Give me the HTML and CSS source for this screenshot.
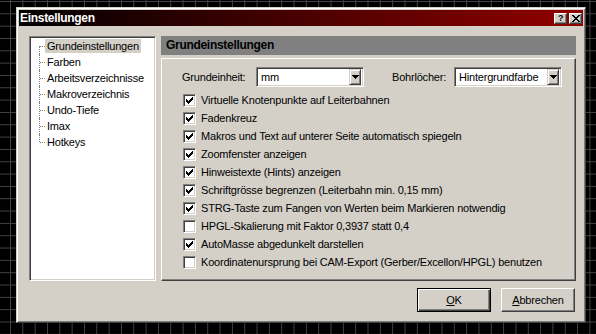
FILE: index.html
```html
<!DOCTYPE html>
<html lang="de">
<head>
    <meta charset="UTF-8">
    <title>Einstellungen</title>
    <link rel="stylesheet" href="styles.css">
</head>
<body>
    <div class="window">
        <div class="titlebar">
            <span class="title">Einstellungen</span>
            <div class="caption-buttons">
                <span class="cap-btn help">?</span>
                <span class="cap-btn">
                    <svg width="8" height="7" viewBox="0 0 8 7" shape-rendering="crispEdges">
                        <path d="M0 0h2v1h-2zM6 0h2v1h-2zM1 1h2v1h-2zM5 1h2v1h-2zM2 2h4v1h-4zM3 3h2v1h-2zM2 4h4v1h-4zM1 5h2v1h-2zM5 5h2v1h-2zM0 6h2v1h-2zM6 6h2v1h-2z" fill="#000"/>
                    </svg>
                </span>
            </div>
        </div>

        <div class="client">
            <div class="main">
                <div class="tree">
                    <ul>
                        <li class="first selected"><span>Grundeinstellungen</span></li>
                        <li><span>Farben</span></li>
                        <li><span>Arbeitsverzeichnisse</span></li>
                        <li><span>Makroverzeichnis</span></li>
                        <li><span>Undo-Tiefe</span></li>
                        <li><span>Imax</span></li>
                        <li class="last"><span>Hotkeys</span></li>
                    </ul>
                </div>

                <div class="page">
                    <div class="page-header">Grundeinstellungen</div>
                    <div class="page-body">
                        <div class="field-row">
                            <label class="lbl-unit">Grundeinheit:</label>
                            <div class="combo">
                                <span class="combo-value">mm</span>
                                <span class="combo-btn"><svg width="7" height="4" viewBox="0 0 7 4" shape-rendering="crispEdges"><path d="M0 0h7v1h-7zM1 1h5v1h-5zM2 2h3v1h-3zM3 3h1v1h-1z" fill="#000"/></svg></span>
                            </div>
                            <label class="lbl-holes">Bohrlöcher:</label>
                            <div class="combo">
                                <span class="combo-value">Hintergrundfarbe</span>
                                <span class="combo-btn"><svg width="7" height="4" viewBox="0 0 7 4" shape-rendering="crispEdges"><path d="M0 0h7v1h-7zM1 1h5v1h-5zM2 2h3v1h-3zM3 3h1v1h-1z" fill="#000"/></svg></span>
                            </div>
                        </div>

                        <ul class="checks">
                            <li><span class="box on"></span>Virtuelle Knotenpunkte auf Leiterbahnen</li>
                            <li><span class="box on"></span>Fadenkreuz</li>
                            <li><span class="box on"></span>Makros und Text auf unterer Seite automatisch spiegeln</li>
                            <li><span class="box on"></span>Zoomfenster anzeigen</li>
                            <li><span class="box on"></span>Hinweistexte (Hints) anzeigen</li>
                            <li><span class="box on"></span>Schriftgrösse begrenzen (Leiterbahn min. 0,15 mm)</li>
                            <li><span class="box on"></span>STRG-Taste zum Fangen von Werten beim Markieren notwendig</li>
                            <li><span class="box"></span>HPGL-Skalierung mit Faktor 0,3937 statt 0,4</li>
                            <li><span class="box on"></span>AutoMasse abgedunkelt darstellen</li>
                            <li><span class="box"></span>Koordinatenursprung bei CAM-Export (Gerber/Excellon/HPGL) benutzen</li>
                        </ul>
                    </div>
                </div>
            </div>

            <div class="footer">
                <button class="btn default"><u>O</u>K</button>
                <button class="btn"><u>A</u>bbrechen</button>
            </div>
        </div>
    </div>
</body>
</html>
```

FILE: styles.css
```css
body {
    margin: 0;
    width: 596px;
    height: 334px;
    overflow: hidden;
    background-color: #000;
    background-image: linear-gradient(90deg, #454545 1px, transparent 1px), linear-gradient(#454545 1px, transparent 1px);
    background-size: 12.33px 12.33px;
    background-position: 10px 1px;
    font-family: "Liberation Sans", Arial, sans-serif;
    font-size: 11px;
    letter-spacing: -0.2px;
    color: #000;
}
ul {
    list-style: none;
    margin: 0;
    padding: 0;
}

/* window frame */
.window {
    box-sizing: border-box;
    width: 570px;
    height: 316px;
    margin: 7px 0 0 16px;
    padding: 2px;
    background: #d4d0c8;
    border: 1px solid;
    border-color: #d4d0c8 #404040 #404040 #d4d0c8;
    box-shadow: inset 1px 1px #fff, inset -1px -1px #808080;
    display: flex;
    flex-direction: column;
}
.titlebar {
    height: 16px;
    flex-shrink: 0;
    display: flex;
    align-items: center;
    justify-content: space-between;
    padding: 0 1px 0 1px;
    background: linear-gradient(90deg, #000 0%, #920000 100%);
    color: #fff;
    font-weight: bold;
    font-size: 12px;
    letter-spacing: -0.3px;
}
.caption-buttons {
    display: flex;
    gap: 2px;
}
.cap-btn {
    box-sizing: border-box;
    width: 13px;
    height: 11px;
    background: #d4d0c8;
    border: 1px solid;
    border-color: #fff #404040 #404040 #fff;
    box-shadow: inset -1px -1px #808080;
    display: flex;
    align-items: center;
    justify-content: center;
    color: #000;
    font-size: 9px;
    line-height: 9px;
}

.client {
    flex: 1;
    padding: 10px 7px 0 10px;
    display: flex;
    flex-direction: column;
}
.main {
    display: flex;
    gap: 5px;
    height: 245px;
}

/* tree */
.tree {
    box-sizing: border-box;
    width: 127px;
    padding: 1px 0 0 9px;
    background: #fff;
    border: 1px solid;
    border-color: #808080 #fff #fff #808080;
    box-shadow: inset 1px 1px #404040, inset -1px -1px #d4d0c8;
}
.tree li {
    position: relative;
    height: 16px;
}
.tree li::before {
    content: "";
    position: absolute;
    left: 0;
    top: 0;
    height: 16px;
    border-left: 1px dotted #808080;
}
.tree li.first::before {
    top: 8px;
    height: 8px;
}
.tree li.last::before {
    height: 8px;
}
.tree li::after {
    content: "";
    position: absolute;
    left: 1px;
    top: 8px;
    width: 5px;
    border-top: 1px dotted #808080;
}
.tree li span {
    display: inline-block;
    margin: 1px 0 0 6px;
    padding: 0 2px;
    line-height: 14px;
}
.tree li.selected span {
    background: #d4d0c8;
}

/* page */
.page {
    width: 415px;
    display: flex;
    flex-direction: column;
}
.page-header {
    height: 19px;
    line-height: 19px;
    padding-left: 5px;
    background: #808080;
    font-weight: bold;
    font-size: 12px;
    letter-spacing: -0.3px;
}
.page-body {
    flex: 1;
    margin-top: 3px;
    padding: 8px 0 0 20px;
    border: 1px solid;
    border-color: #fff #404040 #404040 #fff;
    box-shadow: inset -1px -1px #808080;
}
.field-row {
    display: flex;
    align-items: center;
    height: 20px;
}
.lbl-unit {
    width: 74px;
}
.lbl-holes {
    width: 62px;
    margin-left: 28px;
}
.combo {
    box-sizing: border-box;
    width: 108px;
    height: 20px;
    padding: 2px;
    display: flex;
    align-items: center;
    background: #fff;
    border: 1px solid;
    border-color: #808080 #fff #fff #808080;
    box-shadow: inset 1px 1px #404040, inset -1px -1px #d4d0c8;
}
.combo-value {
    flex: 1;
    padding-left: 2px;
}
.combo-btn {
    box-sizing: border-box;
    width: 12px;
    height: 16px;
    display: flex;
    align-items: center;
    justify-content: center;
    background: #d4d0c8;
    border: 1px solid;
    border-color: #d4d0c8 #404040 #404040 #d4d0c8;
    box-shadow: inset 1px 1px #fff, inset -1px -1px #808080;
}

/* checkboxes */
.checks {
    margin: 4px 0 0 1px;
}
.checks li {
    height: 18px;
    display: flex;
    align-items: center;
}
.box {
    box-sizing: border-box;
    width: 13px;
    height: 13px;
    margin-right: 5px;
    flex-shrink: 0;
    background: #fff;
    border: 1px solid;
    border-color: #808080 #fff #fff #808080;
    box-shadow: inset 1px 1px #404040, inset -1px -1px #d4d0c8;
}
.box.on {
    background: #fff url("data:image/svg+xml,%3Csvg xmlns='http://www.w3.org/2000/svg' width='7' height='7' shape-rendering='crispEdges'%3E%3Cpath d='M6 0h1v3h-1zM5 1h1v3h-1zM4 2h1v3h-1zM3 3h1v3h-1zM2 4h1v3h-1zM1 3h1v3h-1zM0 2h1v3h-1z' fill='%23000'/%3E%3C/svg%3E") no-repeat 2px 2px;
}

/* buttons */
.footer {
    display: flex;
    justify-content: flex-end;
    gap: 10px;
    margin-top: 7px;
    padding-right: 1px;
}
.btn {
    box-sizing: border-box;
    width: 74px;
    height: 24px;
    padding: 0;
    font: inherit;
    letter-spacing: inherit;
    color: #000;
    background: #d4d0c8;
    border: 1px solid;
    border-color: #fff #404040 #404040 #fff;
    box-shadow: inset -1px -1px #808080;
}
.btn.default {
    border: 1px solid #000;
    box-shadow: inset 1px 1px #fff, inset -1px -1px #404040, inset -2px -2px #808080;
}
```
